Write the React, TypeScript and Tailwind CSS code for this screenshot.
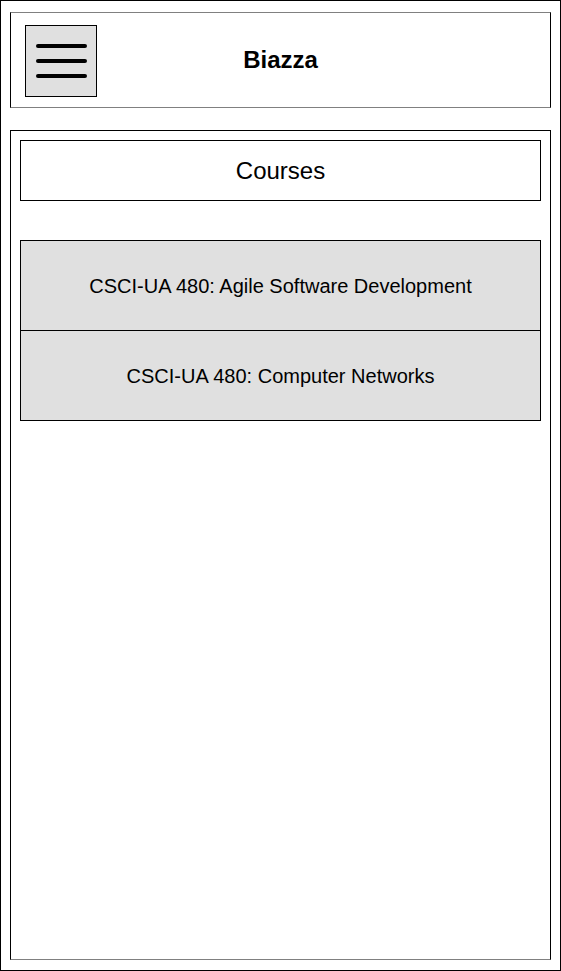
import React from "react";

export default function App() {
  const courses = [
    "CSCI-UA 480: Agile Software Development",
    "CSCI-UA 480: Computer Networks",
  ];
  return (
    <div
      className="w-[561px] h-[971px] border border-black bg-white pt-[11px] px-[9px] text-black"
      style={{ fontFamily: '"Liberation Sans", Arial, sans-serif' }}
    >
      <header className="h-[96px] border-x border-x-black border-y border-y-[#808080] grid grid-cols-[1fr_auto_1fr] items-center">
        <div className="self-start flex items-start pl-[14px] pt-[12px]">
          <button className="w-[72px] h-[72px] border border-black bg-[#e0e0e0] flex flex-col items-center justify-center gap-[11px]">
            <span className="block w-[51px] h-[4px] rounded-full bg-black" />
            <span className="block w-[51px] h-[4px] rounded-full bg-black" />
            <span className="block w-[51px] h-[4px] rounded-full bg-black" />
          </button>
        </div>
        <h1 className="text-[24px] font-bold leading-none">Biazza</h1>
        <div />
      </header>

      <main className="mt-[22px] h-[830px] border-x border-t border-black border-b border-b-[#808080] px-[9px] pt-[9px]">
        <div className="h-[61px] border border-black flex items-center justify-center">
          <h2 className="text-[24px] leading-none">Courses</h2>
        </div>
        <ul className="mt-[39px] border border-black divide-y divide-black">
          {courses.map((c) => (
            <li
              key={c}
              className="h-[90px] last:h-[89px] bg-[#e0e0e0] flex items-center justify-center text-[20px] leading-none"
            >
              {c}
            </li>
          ))}
        </ul>
      </main>
    </div>
  );
}
